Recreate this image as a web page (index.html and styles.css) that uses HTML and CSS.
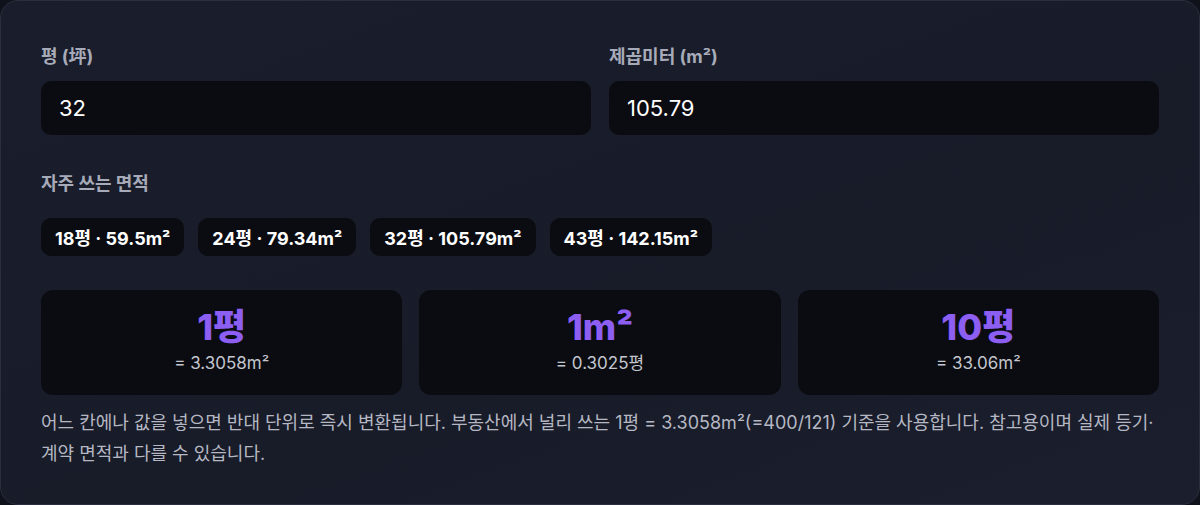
FILE: index.html
```html
<!DOCTYPE html>
<html lang="ko">
<head>
    <meta charset="UTF-8">
    <meta name="viewport" content="width=device-width, initial-scale=1.0">
    <title>평 ↔ 제곱미터 변환</title>
    <link rel="stylesheet" href="styles.css">
</head>
<body>
    <div class="converter">
        <div class="fields">
            <div class="field">
                <label for="pyeong">평 (坪)</label>
                <input id="pyeong" type="text" value="32">
            </div>
            <div class="field">
                <label for="sqm">제곱미터 (m²)</label>
                <input id="sqm" type="text" value="105.79">
            </div>
        </div>

        <div class="presets">
            <h2>자주 쓰는 면적</h2>
            <div class="chips">
                <button class="chip">18평 · 59.5m²</button>
                <button class="chip">24평 · 79.34m²</button>
                <button class="chip">32평 · 105.79m²</button>
                <button class="chip">43평 · 142.15m²</button>
            </div>
        </div>

        <div class="cards">
            <div class="card">
                <div class="big">1평</div>
                <div class="sub">= 3.3058m²</div>
            </div>
            <div class="card">
                <div class="big">1m²</div>
                <div class="sub">= 0.3025평</div>
            </div>
            <div class="card">
                <div class="big">10평</div>
                <div class="sub">= 33.06m²</div>
            </div>
        </div>

        <p class="note">어느 칸에나 값을 넣으면 반대 단위로 즉시 변환됩니다. 부동산에서 널리 쓰는 1평 = 3.3058m²(=400/121) 기준을 사용합니다. 참고용이며 실제 등기·계약 면적과 다를 수 있습니다.</p>
    </div>
</body>
</html>
```

FILE: styles.css
```css
html, body {
    margin: 0;
    padding: 0;
    background: #10121b;
}

body {
    font-family: Inter, "Noto Sans CJK KR", sans-serif;
    color: #fff;
}

.converter {
    box-sizing: border-box;
    width: 1200px;
    height: 505px;
    padding: 44px 40px 0;
    border: 1px solid #2a2e3e;
    border-radius: 18px;
    background: linear-gradient(160deg, #1a1d2b 0%, #181b28 60%, #1b1e2c 100%);
}

.fields {
    display: grid;
    grid-template-columns: 1fr 1fr;
    gap: 18px;
}

.field label {
    display: block;
    font-size: 18px;
    font-weight: 700;
    line-height: 24px;
    color: #a7abb9;
    margin-bottom: 12px;
}

.field input {
    box-sizing: border-box;
    display: block;
    width: 100%;
    height: 54px;
    padding: 0 18px;
    border: none;
    border-radius: 10px;
    background: #0b0c11;
    color: #fff;
    font-family: Inter, "Noto Sans CJK KR", sans-serif;
    font-size: 22px;
    outline: none;
}

.presets {
    margin-top: 37px;
}

.presets h2 {
    margin: 0 0 22px;
    font-size: 18px;
    font-weight: 700;
    line-height: 24px;
    color: #a7abb9;
}

.chips {
    display: flex;
    gap: 14px;
}

.chip {
    height: 38px;
    padding: 0 14px;
    border: none;
    border-radius: 10px;
    background: #0b0c11;
    color: #fff;
    font-family: Inter, "Noto Sans CJK KR", sans-serif;
    font-size: 18px;
    font-weight: 700;
}

.cards {
    display: grid;
    grid-template-columns: repeat(3, 1fr);
    gap: 17px;
    margin-top: 34px;
}

.card {
    height: 105px;
    border-radius: 12px;
    background: #0b0c11;
    text-align: center;
    box-sizing: border-box;
    padding-top: 15px;
}

.card .big {
    font-size: 36px;
    font-weight: 800;
    line-height: 44px;
    color: #8d5ef2;
}

.card .sub {
    margin-top: 3px;
    font-size: 17px;
    line-height: 22px;
    color: #c3c6cf;
}

.note {
    margin: 12px 0 0;
    font-size: 18px;
    line-height: 31px;
    color: #b5b8c3;
}
```
